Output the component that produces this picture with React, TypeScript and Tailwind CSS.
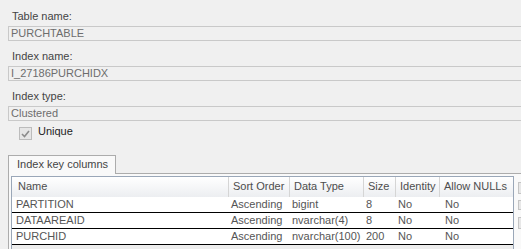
import React from 'react';

const columns = [
  { title: 'Name', width: 'w-[217px]' },
  { title: 'Sort Order', width: 'w-[61px]' },
  { title: 'Data Type', width: 'w-[74px]' },
  { title: 'Size', width: 'w-[32px]' },
  { title: 'Identity', width: 'w-[44px]' },
  { title: 'Allow NULLs', width: 'w-[73px]' },
];

const rows = [
  ['PARTITION', 'Ascending', 'bigint', '8', 'No', 'No'],
  ['DATAAREAID', 'Ascending', 'nvarchar(4)', '8', 'No', 'No'],
  ['PURCHID', 'Ascending', 'nvarchar(100)', '200', 'No', 'No'],
];

function Field({ label, value, first }: { label: string; value: string; first?: boolean }) {
  return (
    <div className={first ? 'pt-[10px]' : 'mt-[9px]'}>
      <div className="pl-[12px] leading-[13px] text-[#444444]">{label}</div>
      <div className="ml-[8px] mt-[3px] h-[15px] border-y border-l border-[#c9c9c9] pl-[2px] leading-[13px] text-[#6d6d6d]">
        {value}
      </div>
    </div>
  );
}

export default function App() {
  return (
    <div className="w-[521px] h-[249px] overflow-hidden bg-[#f0f0f0] font-['Liberation_Sans',Arial,sans-serif] text-[11px]">
      <Field first label="Table name:" value="PURCHTABLE" />
      <Field label="Index name:" value="I_27186PURCHIDX" />
      <Field label="Index type:" value="Clustered" />

      {/* Unique checkbox (disabled) */}
      <div className="mt-[4px] flex items-start pl-[19px]">
        <div className="mt-[2px] flex h-[13px] w-[13px] items-center justify-center border border-[#bcbcbc] bg-[#e6e6e6]">
          <svg width="9" height="8" viewBox="0 0 9 8">
            <path d="M1 4 L3.5 6.5 L8 1" fill="none" stroke="#8c8c8c" strokeWidth="1.6" />
          </svg>
        </div>
        <span className="ml-[6px] leading-[13px] text-[#1e1e1e]">Unique</span>
      </div>

      {/* Tab header */}
      <div className="relative z-10 mb-[-1px] ml-[8px] mt-[15px] h-[19px] w-[108px] border-x border-t border-[#acacac] bg-[#f9f9f9] pl-[8px] pt-[2px] leading-[13px] text-[#444444]">
        Index key columns
      </div>

      {/* Tab page */}
      <div className="ml-[8px] h-[80px] border-l border-t border-[#acacac] bg-[#f9f9f9] pl-[2px] pt-[2px]">
        <div className="flex">
          <div className="h-[80px] w-[504px] border border-[#9aa7b8] bg-[#ededed]">
            <div className="flex h-[20px] bg-gradient-to-b from-white to-[#eceef1]">
              {columns.map((c, i) => (
                <div
                  key={c.title}
                  className={`${c.width} ${i < columns.length - 1 ? 'border-r border-[#d5d5d5]' : ''} ${i === 0 ? 'pl-[6px]' : 'pl-[4px]'} pt-[3px] leading-[13px] text-[#4d4d4d]`}
                >
                  {c.title}
                </div>
              ))}
            </div>
            {rows.map((r) => (
              <div key={r[0]} className="flex h-[16px] border-b border-black bg-white leading-[15px] text-[#555555]">
                {r.map((cell, i) => (
                  <div key={i} className={`${columns[i].width} ${i === 0 ? 'pl-[4px]' : i === 5 ? 'pl-[5px]' : 'pl-[2px]'} whitespace-nowrap`}>
                    {cell}
                  </div>
                ))}
              </div>
            ))}
          </div>
          <div className="ml-[4px] flex flex-col pt-[6px]">
            <div className="h-[12px] w-[8px] border border-[#c4c4c4] bg-[#e8e8e8]" />
            <div className="mt-[6px] h-[10px] w-[8px] border border-[#c4c4c4] bg-[#e8e8e8]" />
            <div className="mt-[7px] h-[12px] w-[8px] border border-[#c4c4c4] bg-[#e8e8e8]" />
          </div>
        </div>
      </div>
    </div>
  );
}
